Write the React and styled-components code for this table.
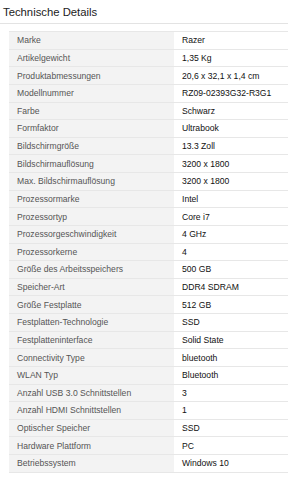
import React from "react";
import styled, { createGlobalStyle } from "styled-components";

const GlobalStyle = createGlobalStyle`
  body {
    margin: 0;
    overflow: hidden;
    background: #fff;
    font-family: Arial, "Liberation Sans", sans-serif;
  }
`;

const Page = styled.div`
  width: 288px;
  height: 480px;
  overflow: hidden;
`;

const Title = styled.h2`
  margin: 0;
  padding: 4px 0 0 3px;
  height: 19px;
  font-size: 11.3px;
  font-weight: normal;
  line-height: 17px;
  color: #222;
  border-bottom: 1px solid #e3e3e3;
`;

const Table = styled.table`
  margin: 7px 0 0 9px;
  width: 300px;
  border-collapse: collapse;
  font-size: 8.6px;
`;

const Row = styled.tr`
  height: 17.64px;
  border-top: 1px solid #e7e7e7;

  &:last-child {
    border-bottom: 1px solid #e7e7e7;
  }
`;

const Label = styled.th`
  width: 157px;
  padding: 0 0 0 8px;
  background: #f3f3f3;
  color: #555;
  font-weight: normal;
  text-align: left;
  white-space: nowrap;
`;

const Value = styled.td`
  padding: 0 0 0 8px;
  color: #111;
  white-space: nowrap;
`;

const details = [
  ["Marke", "Razer"],
  ["Artikelgewicht", "1,35 Kg"],
  ["Produktabmessungen", "20,6 x 32,1 x 1,4 cm"],
  ["Modellnummer", "RZ09-02393G32-R3G1"],
  ["Farbe", "Schwarz"],
  ["Formfaktor", "Ultrabook"],
  ["Bildschirmgröße", "13.3 Zoll"],
  ["Bildschirmauflösung", "3200 x 1800"],
  ["Max. Bildschirmauflösung", "3200 x 1800"],
  ["Prozessormarke", "Intel"],
  ["Prozessortyp", "Core i7"],
  ["Prozessorgeschwindigkeit", "4 GHz"],
  ["Prozessorkerne", "4"],
  ["Größe des Arbeitsspeichers", "500 GB"],
  ["Speicher-Art", "DDR4 SDRAM"],
  ["Größe Festplatte", "512 GB"],
  ["Festplatten-Technologie", "SSD"],
  ["Festplatteninterface", "Solid State"],
  ["Connectivity Type", "bluetooth"],
  ["WLAN Typ", "Bluetooth"],
  ["Anzahl USB 3.0 Schnittstellen", "3"],
  ["Anzahl HDMI Schnittstellen", "1"],
  ["Optischer Speicher", "SSD"],
  ["Hardware Plattform", "PC"],
  ["Betriebssystem", "Windows 10"],
];

function App() {
  return (
    <Page>
      <GlobalStyle />
      <Title>Technische Details</Title>
      <Table>
        <tbody>
          {details.map(([label, value]) => (
            <Row key={label}>
              <Label>{label}</Label>
              <Value>{value}</Value>
            </Row>
          ))}
        </tbody>
      </Table>
    </Page>
  );
}

export default App;
